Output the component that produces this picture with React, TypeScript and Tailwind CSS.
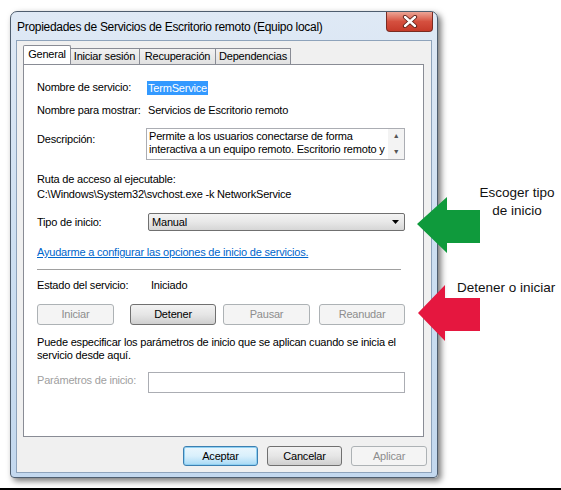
import React from "react";

const ui = { fontFamily: '"Liberation Sans", Arial, sans-serif' };
const note = { fontFamily: '"Liberation Sans", Arial, sans-serif' };

function WinButton({
  label,
  width,
  disabled,
  focused,
  className = "",
}: {
  label: string;
  width: number;
  disabled?: boolean;
  focused?: boolean;
  className?: string;
}) {
  let look =
    "border-[#707070] bg-gradient-to-b from-[#f2f2f2] via-[#e6e6e6] to-[#cfcfcf] text-black";
  if (disabled) look = "border-[#adb2b5] bg-[#f4f4f4] text-[#8d8d8d]";
  if (focused)
    look =
      "border-[#3c7fb1] bg-gradient-to-b from-[#eaf6fd] via-[#d9f0fc] to-[#a7d9f5] text-black shadow-[inset_0_0_0_1px_#8fd0f2]";
  return (
    <div
      className={`flex items-center justify-center rounded-[3px] border ${look} ${className}`}
      style={{ width }}
    >
      {label}
    </div>
  );
}

function Tab({ label, width, active }: { label: string; width: number; active?: boolean }) {
  if (active) {
    return (
      <div
        className="relative z-10 flex h-[19px] items-start justify-center rounded-t-[2px] border border-b-0 border-[#898c95] bg-white pt-[1px] leading-[15px]"
        style={{ width }}
      >
        {label}
      </div>
    );
  }
  return (
    <div
      className="flex h-[16px] items-center justify-center whitespace-nowrap border border-b-0 border-l-0 border-[#898c95] bg-gradient-to-b from-[#f2f2f2] to-[#e1e1e1] leading-[15px]"
      style={{ width }}
    >
      {label}
    </div>
  );
}

export default function App() {
  return (
    <div
      className="relative h-[490px] w-[561px] overflow-hidden bg-white text-[11px] tracking-[-0.2px]"
      style={ui}
    >
      <div className="pl-[10px] pt-[11px]">
        {/* Window */}
        <div className="flex h-[467px] w-[428px] flex-col rounded-t-[7px] rounded-b-[4px] border border-[#4e5d6e] bg-gradient-to-b from-[#dfe9f5] via-[#cddff1] to-[#c3d8ee] shadow-[3px_3px_6px_rgba(0,0,0,0.55)]">
          {/* Title bar */}
          <div className="flex h-[28px] items-start">
            <div className="whitespace-nowrap pl-[6px] pt-[8px] text-[12px] leading-[15px] tracking-[-0.3px] text-black">
              Propiedades de Servicios de Escritorio remoto (Equipo local)
            </div>
            <div className="ml-auto mr-[4px] flex h-[20px] w-[47px] items-center justify-center rounded-b-[4px] border border-t-0 border-[#7a2b22] bg-gradient-to-b from-[#eba596] via-[#d5503f] to-[#c63a2a]">
              <svg width="16" height="13" viewBox="0 0 16 13">
                <path d="M3 2 L13 11 M13 2 L3 11" stroke="#5a1f18" strokeWidth="4.2" strokeLinecap="round" />
                <path d="M3 2 L13 11 M13 2 L3 11" stroke="#ffffff" strokeWidth="2.4" strokeLinecap="round" />
              </svg>
            </div>
          </div>

          {/* Client area */}
          <div className="mx-[5px] flex h-[433px] flex-col border border-[#8ea3bb] bg-[#f0f0f0]">
            {/* Tabs */}
            <div className="ml-[6px] mt-[5px] flex h-[18px] items-end">
              <Tab label="General" width={48} active />
              <div className="-ml-px flex items-end">
                <Tab label="Iniciar sesión" width={70} />
                <Tab label="Recuperación" width={76} />
                <Tab label="Dependencias" width={75} />
              </div>
            </div>

            {/* Panel */}
            <div className="ml-[6px] h-[373px] w-[401px] whitespace-nowrap border border-[#898c95] bg-white pl-[13px] pt-[15px] leading-[15px] text-black">
              <div className="flex h-[15px] items-center">
                <div className="w-[110px]">Nombre de servicio:</div>
                <span className="bg-[#3399ff] px-[1px] leading-[14px] text-white">TermService</span>
              </div>

              <div className="mt-[8px] flex">
                <div className="w-[111px]">Nombre para mostrar:</div>
                <div>Servicios de Escritorio remoto</div>
              </div>

              <div className="mt-[10px] flex items-start">
                <div className="w-[109px] pt-[4px]">Descripción:</div>
                <div className="flex h-[32px] w-[259px] border border-[#abadb3] bg-white">
                  <div className="h-[30px] flex-1 overflow-hidden pl-[2px] pt-px leading-[13px]">
                    Permite a los usuarios conectarse de forma
                    <br />
                    interactiva a un equipo remoto. Escritorio remoto y
                  </div>
                  <div className="flex w-[16px] flex-col items-center justify-between bg-[#f3f3f3] py-[3px] text-[7px] leading-[8px] text-[#555]">
                    <span>▲</span>
                    <span>▼</span>
                  </div>
                </div>
              </div>

              <div className="mt-[12px]">Ruta de acceso al ejecutable:</div>
              <div>C:\Windows\System32\svchost.exe -k NetworkService</div>

              <div className="mt-[11px] flex h-[18px] items-center">
                <div className="w-[111px]">Tipo de inicio:</div>
                <div className="flex h-[18px] w-[257px] items-center rounded-[2px] border border-[#707070] bg-gradient-to-b from-[#f3f3f3] via-[#e8e8e8] to-[#d6d6d6] pl-[3px] pr-[5px]">
                  <span>Manual</span>
                  <svg className="ml-auto" width="7" height="4" viewBox="0 0 7 4">
                    <path d="M0 0 H7 L3.5 4 Z" fill="#000" />
                  </svg>
                </div>
              </div>

              <div className="mt-[14px] text-[#0066cc] underline">
                Ayudarme a configurar las opciones de inicio de servicios.
              </div>

              <div className="mt-[9px] w-[364px] border-t border-[#a0a0a0]" />

              <div className="mt-[8px] flex">
                <div className="w-[114px]">Estado del servicio:</div>
                <div>Iniciado</div>
              </div>

              <div className="mt-[11px] flex h-[21px]">
                <WinButton label="Iniciar" width={77} disabled />
                <WinButton label="Detener" width={86} className="ml-[16px]" />
                <WinButton label="Pausar" width={87} disabled className="ml-[7px]" />
                <WinButton label="Reanudar" width={86} disabled className="ml-[9px]" />
              </div>

              <div className="mt-[11px] leading-[13px]">
                Puede especificar los parámetros de inicio que se aplican cuando se inicia el
                <br />
                servicio desde aquí.
              </div>

              <div className="mt-[10px] flex items-start">
                <div className="w-[111px] pt-[1px] text-[#a0a0a0]">Parámetros de inicio:</div>
                <div className="h-[21px] w-[257px] border border-[#abadb3] bg-white" />
              </div>
            </div>

            {/* Dialog buttons */}
            <div className="mt-[9px] flex h-[20px] justify-end gap-[9px] pr-[4px]">
              <WinButton label="Aceptar" width={75} focused />
              <WinButton label="Cancelar" width={75} />
              <WinButton label="Aplicar" width={76} disabled />
            </div>
          </div>
        </div>
      </div>

      {/* Callouts */}
      <svg className="absolute left-[416px] top-[196px]" width="64" height="58" viewBox="0 0 64 58">
        <path d="M1 28 L31 1 L31 14 L64 14 L64 47 L31 47 L31 57 Z" fill="#0f9a3c" />
      </svg>
      <div
        className="absolute left-[476px] top-[184px] w-[82px] text-center text-[13.5px] leading-[18px] tracking-normal text-[#111]"
        style={note}
      >
        Escoger tipo
        <br />
        de inicio
      </div>

      <svg className="absolute left-[416px] top-[284px]" width="64" height="60" viewBox="0 0 64 60">
        <path d="M2 29 L29 1 L29 14 L64 14 L64 47 L29 47 L29 57 Z" fill="#e5173f" />
      </svg>
      <div
        className="absolute left-[457px] top-[280px] text-[13.5px] leading-[16px] tracking-normal text-[#111]"
        style={note}
      >
        Detener o iniciar
      </div>

      <div className="absolute bottom-0 left-0 h-[2px] w-full bg-black" />
    </div>
  );
}
